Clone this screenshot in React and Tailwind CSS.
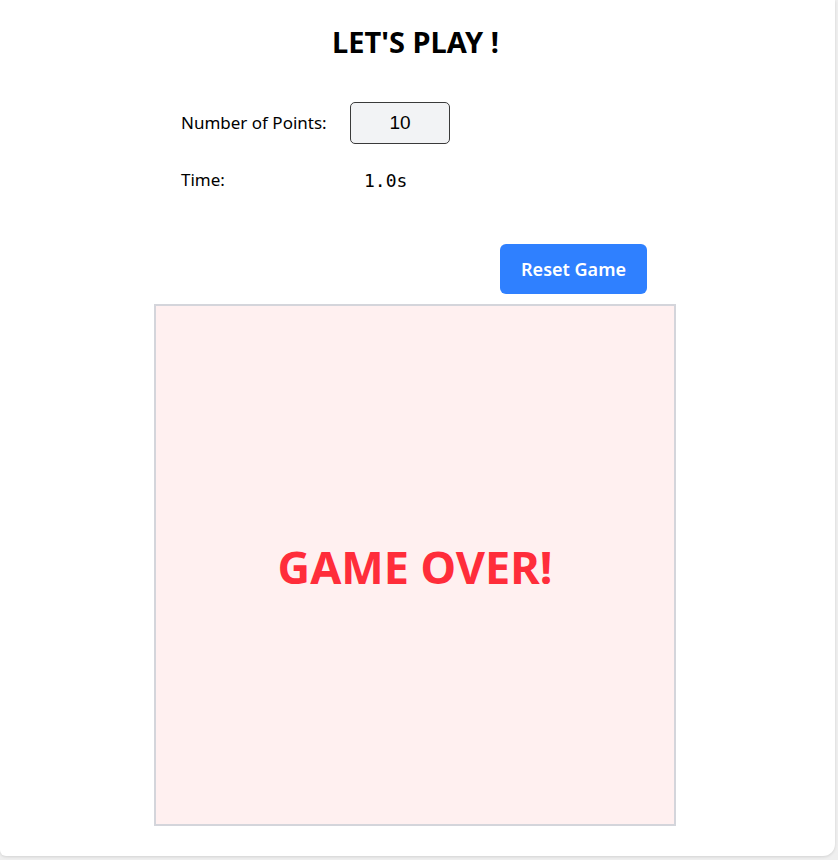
import React from "react";

const App = () => {
  return (
    <div className="min-h-[860px] w-[838px] bg-[#efefef]" style={{ fontFamily: '"Noto Sans", "Open Sans", sans-serif' }}>
      <div className="w-[835px] h-[856px] bg-white rounded-br-xl rounded-bl-md shadow-[0_1px_3px_rgba(0,0,0,0.12)] flex flex-col">
        {/* Title */}
        <h1 className="mt-[24px] text-center text-[29px] font-bold leading-9 text-black pr-[4px]">
          LET'S PLAY !
        </h1>

        <div className="ml-[154px] w-[522px] flex flex-col">
          {/* Points */}
          <div className="mt-[42px] pl-[27px] flex items-center">
            <span className="w-[169px] text-[17px] text-black">Number of Points:</span>
            <div className="w-[100px] h-[42px] rounded-[5px] border border-[#3a3a3a] bg-[#f2f3f5] flex items-center justify-center text-[19px] text-black" style={{ fontFamily: '"Liberation Sans", Arial, sans-serif' }}>
              10
            </div>
          </div>

          {/* Time */}
          <div className="mt-[22px] pl-[27px] flex items-center h-[28px]">
            <span className="w-[183px] text-[17px] text-black">Time:</span>
            <span className="text-[18px] text-black" style={{ fontFamily: '"DejaVu Sans Mono", "Liberation Mono", monospace' }}>1.0s</span>
          </div>

          {/* Reset */}
          <div className="mt-[50px] flex justify-end pr-[29px]">
            <button className="w-[147px] h-[50px] rounded-md bg-[#2f80ff] text-white text-[18px] font-semibold">
              Reset Game
            </button>
          </div>

          {/* Board */}
          <div className="mt-[10px] w-[522px] h-[522px] border-2 border-[#d4d5db] bg-[#fff0f0] flex items-center justify-center">
            <span className="text-[45px] font-bold text-[#ff2d3a] pt-[4px]">GAME OVER!</span>
          </div>
        </div>
      </div>
    </div>
  );
};

export default App;
